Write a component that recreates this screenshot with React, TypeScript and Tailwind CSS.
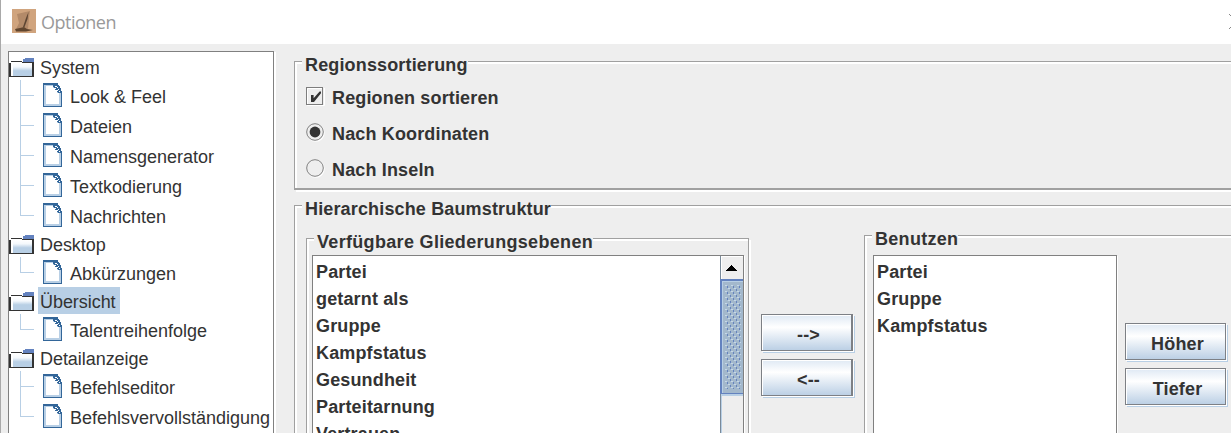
import type { ReactNode } from "react";

function FolderIcon() {
  return (
    <svg className="block shrink-0" width="26" height="20" viewBox="0 0 26 20" shapeRendering="crispEdges">
      <defs>
        <linearGradient id="folder" x1="0" y1="0" x2="0" y2="1">
          <stop offset="0" stopColor="#ffffff" />
          <stop offset="0.3" stopColor="#f4f8fc" />
          <stop offset="0.6" stopColor="#b8cfe5" />
          <stop offset="1" stopColor="#b8cfe5" />
        </linearGradient>
      </defs>
      <path d="M16 0H25V3H14V1H16Z" fill="#6382bf" />
      <path d="M2 3H13V4H25V19H0V5H2Z" fill="#333" />
      <rect x="2" y="4" width="21" height="14" fill="#fff" />
      <rect x="4" y="5" width="19" height="13" fill="url(#folder)" />
      <rect x="14" y="3" width="11" height="1" fill="#6382bf" />
      <rect x="13" y="4" width="12" height="1" fill="#333" />
    </svg>
  );
}

function FileIcon() {
  return (
    <svg className="block shrink-0" width="19" height="24" viewBox="0 0 19 24" shapeRendering="crispEdges">
      <path d="M0 0H15V2H16V3H17V5H18V8H19V24H0Z" fill="#336699" />
      <path d="M1 2H10V4H12V6H14V8H15V10H18V23H1Z" fill="#b8cfe5" />
      <path d="M3 3H10V5H12V7H14V10H16V21H3Z" fill="#fff" />
      <path d="M12 3h2v1h-2zM14 4h1v1h-1zM15 6h1v1h-1zM16 8h1v1h-1zM12 5h1v1h-1zM14 7h1v1h-1z" fill="#fff" />
      <path d="M10 2h2v1h-2zM11 3h1v2h-1zM13 5h2v1h-2zM12 6h2v1h-2zM14 8h1v1h-1z" fill="#336699" />
    </svg>
  );
}

function Leaf({ label, last }: { label: string; last?: boolean }) {
  return (
    <li className="flex h-[30px]">
      <div className="ml-[11px] w-[14px]">
        <div className="h-[16px] border-b border-l border-[#b8cfe5]" />
        {!last && <div className="h-[14px] border-l border-[#b8cfe5]" />}
      </div>
      <div className="ml-[9px] pt-[3px]">
        <FileIcon />
      </div>
      <span className="ml-2 pt-[2px] leading-[30px] whitespace-nowrap">{label}</span>
    </li>
  );
}

function Branch({ label, items, selected }: { label: string; items: string[]; selected?: boolean }) {
  return (
    <li>
      <div className="flex h-[27px]">
        <div className="pt-[5px]">
          <FolderIcon />
        </div>
        <span
          className={`ml-[3px] pr-1 pl-[2px] leading-[31px] tracking-[-0.05px] ${selected ? "bg-[#b8cfe5]" : ""}`}
        >
          {label}
        </span>
      </div>
      <ul>
        {items.map((item, i) => (
          <Leaf key={item} label={item} last={i === items.length - 1} />
        ))}
      </ul>
    </li>
  );
}

function Group({
  title,
  titleClass = "",
  className,
  children,
}: {
  title: string;
  titleClass?: string;
  className: string;
  children: ReactNode;
}) {
  return (
    <section
      className={`relative border border-[#a0a0a0] shadow-[inset_2px_2px_0_#fff,2px_2px_0_#fff] ${className}`}
    >
      <h2
        className={`absolute -top-[8px] left-[7px] bg-[#eeeeee] pl-[3px] leading-[23px] whitespace-nowrap ${titleClass}`}
      >
        {title}
      </h2>
      {children}
    </section>
  );
}

function MetalButton({ children, className }: { children: ReactNode; className: string }) {
  return (
    <button
      className={`block h-[37px] border border-[#7d8085] bg-linear-to-b from-[#dfe9f4] via-white via-35% to-[#bcd0e5] text-center leading-[40px] font-bold shadow-[inset_1px_1px_0_#fff,1px_1px_0_#fff,2px_2px_0_#b8cfe5] ${className}`}
    >
      {children}
    </button>
  );
}

function List({ items }: { items: string[] }) {
  return (
    <ul className="grow pt-[2px] pl-[3px]">
      {items.map((item) => (
        <li key={item} className="h-[27px] leading-[28px]">
          {item}
        </li>
      ))}
    </ul>
  );
}

function ScrollBar() {
  return (
    <div className="flex w-[23px] shrink-0 flex-col border-l border-[#7a8a99] bg-[#eeeeee]">
      <div className="flex h-[23px] items-center justify-center border-t border-l border-white pr-[2px]">
        <svg width="11" height="6" viewBox="0 0 11 6" shapeRendering="crispEdges">
          <path d="M5 0H6V1H7V2H8V3H9V4H10V5H11V6H0V5H1V4H2V3H3V2H4V1H5Z" fill="#000" />
        </svg>
      </div>
      <div className="-ml-px h-[115px] border-t-2 border-b border-l-2 border-[#6382bf] bg-[#a3b8cc] pt-1 pl-[3px] shadow-[inset_1px_1px_0_#b8cfe5]">
        <svg width="16" height="104" shapeRendering="crispEdges">
          <defs>
            <pattern id="grip" width="6" height="6" patternUnits="userSpaceOnUse">
              <path d="M0 0h2v1h-2zM3 3h2v1h-2z" fill="#c5d8ea" />
              <path d="M2 1h1v2h-1zM5 4h1v2h-1z" fill="#6382bf" />
            </pattern>
          </defs>
          <rect width="16" height="104" fill="url(#grip)" />
        </svg>
      </div>
      <div className="grow border-t-2 border-l border-[#b8cfe5]" />
    </div>
  );
}

function Check() {
  return (
    <svg className="block" width="19" height="19" viewBox="0 0 19 19">
      <rect x="0.5" y="0.5" width="16" height="17" fill="#eee" stroke="#7d7d7d" />
      <path d="M1.5 17V1.5H16M1 18.5H18.5V1" fill="none" stroke="#fff" />
      <path d="M5 8H7.6V11.2L13.6 4.4H15V6.2L8 15H5Z" fill="#333" />
    </svg>
  );
}

function Radio({ checked }: { checked?: boolean }) {
  return (
    <svg className="block" width="19" height="19" viewBox="0 0 19 19">
      <circle cx="9.8" cy="9.8" r="8.2" fill="none" stroke="#fff" strokeWidth="1.5" />
      <circle cx="9" cy="9" r="8.3" fill="#eee" stroke="#808080" />
      {checked && <circle cx="9" cy="9" r="5.4" fill="#333" />}
    </svg>
  );
}

function Option({ icon, label }: { icon: ReactNode; label: string }) {
  return (
    <label className="flex h-[36px] items-start gap-[7px]">
      {icon}
      <span className="pt-[1px] leading-[20px]">{label}</span>
    </label>
  );
}

function AppIcon() {
  return (
    <svg width="24" height="24" viewBox="0 0 24 24">
      <defs>
        <filter id="soft">
          <feGaussianBlur stdDeviation="0.7" />
        </filter>
      </defs>
      <rect width="24" height="24" fill="#d0a47e" />
      <g filter="url(#soft)">
        <path d="M5 5L18 2L17 9L16 20H4L7 14Z" fill="#b38a69" />
        <path d="M16.500 3L14 9L11 18L12.500 18L15.500 10Z" fill="#5d4533" />
        <path d="M3 20L8 19L12 18L15 20L21 21L14 22.500H4Z" fill="#60452f" />
      </g>
    </svg>
  );
}

export default function App() {
  return (
    <div className="flex h-[433px] w-[1231px] flex-col overflow-hidden border-l border-[#a9a9a9] bg-[#eeeeee] font-['Liberation_Sans',Arial,sans-serif] text-[18px] text-[#333333]">
      <header className="flex h-[44px] shrink-0 items-start bg-white pt-[9px] pl-[11px]">
        <AppIcon />
        <span className="ml-[5px] pt-[1px] font-['Open_Sans','Noto_Sans',sans-serif] text-[18px] leading-[24px] tracking-[-0.5px] text-[#999999]">
          Optionen
        </span>
        <svg className="mt-[5px] ml-auto" width="2" height="15" viewBox="0 0 2 15">
          <path d="M0 0L15 15M0 15L15 0" stroke="#888" />
        </svg>
      </header>
      <main className="flex h-[389px] pl-[7px]">
        <nav className="mt-[7px] h-[400px] w-[266px] shrink-0 border border-[#808080] bg-white pt-px shadow-[2px_1px_0_#fff]">
          <ul>
            <Branch
              label="System"
              items={["Look & Feel", "Dateien", "Namensgenerator", "Textkodierung", "Nachrichten"]}
            />
            <Branch label="Desktop" items={["Abkürzungen"]} />
            <Branch label="Übersicht" items={["Talentreihenfolge"]} selected />
            <Branch label="Detailanzeige" items={["Befehlseditor", "Befehlsvervollständigung"]} />
          </ul>
        </nav>
        <div className="ml-5 w-[960px] shrink-0 pt-[17px] font-bold tracking-[0.15px]">
          <Group title="Regionssortierung" className="h-[129px] border-b-2 pt-[25px] pl-[11px]">
            <Option icon={<Check />} label="Regionen sortieren" />
            <Option icon={<Radio checked />} label="Nach Koordinaten" />
            <Option icon={<Radio />} label="Nach Inseln" />
          </Group>
          <Group title="Hierarchische Baumstruktur" className="mt-[15px] flex h-[260px] items-start pl-[11px]">
            <Group
              title="Verfügbare Gliederungsebenen"
              titleClass="tracking-[0.32px]"
              className="mt-[32px] h-[240px] w-[443px] shrink-0 pt-4 pl-[5px]"
            >
              <div className="flex h-[220px] w-[432px] border border-[#808080] bg-white shadow-[1px_1px_0_#fff]">
                <List
                  items={["Partei", "getarnt als", "Gruppe", "Kampfstatus", "Gesundheit", "Parteitarnung", "Vertrauen"]}
                />
                <ScrollBar />
              </div>
            </Group>
            <div className="mt-[108px] ml-3 flex shrink-0 flex-col gap-2">
              <MetalButton className="w-[92px] border-r-2 pl-1">--&gt;</MetalButton>
              <MetalButton className="w-[92px] border-r-2 pl-1">&lt;--</MetalButton>
            </div>
            <Group
              title="Benutzen"
              titleClass="tracking-[0.3px]"
              className="mt-[29px] ml-[11px] flex h-[243px] w-[400px] shrink-0 items-start pt-[19px] pl-2"
            >
              <div className="flex h-[220px] w-[244px] border border-[#808080] bg-white shadow-[1px_1px_0_#fff]">
                <List items={["Partei", "Gruppe", "Kampfstatus"]} />
              </div>
              <div className="mt-[68px] ml-2 flex flex-col gap-2">
                <MetalButton className="w-[101px] pl-1">Höher</MetalButton>
                <MetalButton className="w-[101px] pl-1">Tiefer</MetalButton>
              </div>
            </Group>
          </Group>
        </div>
      </main>
    </div>
  );
}
